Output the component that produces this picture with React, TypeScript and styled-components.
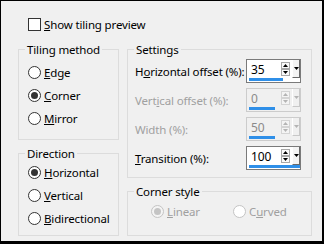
import React from "react";
import styled, { createGlobalStyle } from "styled-components";

const Global = createGlobalStyle`
  html, body { margin: 0; padding: 0; background: #f0f0f0; }
  * { box-sizing: border-box; }
`;

const Dialog = styled.div`
  width: 324px;
  height: 244px;
  background: #f0f0f0;
  border-style: solid;
  border-color: #000;
  border-width: 1px 2px 3px 1px;
  padding: 16px 0 0 17px;
  font-family: "Noto Sans", "DejaVu Sans", sans-serif;
  font-size: 11.5px;
  letter-spacing: -0.15px;
  color: #000;
  display: flex;
  flex-direction: column;
`;

const CheckRow = styled.label`
  display: flex;
  align-items: center;
  height: 15px;
  margin-left: 10px;
  gap: 3px;
`;

const CheckBox = styled.span`
  width: 13px;
  height: 13px;
  border: 1px solid #333;
  background: #fff;
  flex: none;
`;

const Columns = styled.div`
  margin-top: 10px;
  display: grid;
  grid-template-columns: 101px 185px;
  column-gap: 8px;
`;

const Column = styled.div`
  display: flex;
  flex-direction: column;
  gap: 6px;
`;

const Group = styled.fieldset<{ $h: number }>`
  margin: 0;
  min-width: 0;
  border: 1px solid #dcdcdc;
  height: ${(p) => p.$h}px;
  padding: 0;
`;

const Legend = styled.legend`
  padding: 0 2px;
  margin-left: 6px;
  line-height: 15px;
`;

const GroupBody = styled.div<{ $pt: number; $pl: number; $pr?: number }>`
  padding: ${(p) => p.$pt}px ${(p) => p.$pr ?? 0}px 0 ${(p) => p.$pl}px;
`;

const RadioList = styled.div`
  display: flex;
  flex-direction: column;
  gap: 8px;
`;

const RadioRow = styled.label<{ $disabled?: boolean }>`
  display: flex;
  align-items: center;
  height: 15px;
  gap: 3px;
  color: ${(p) => (p.$disabled ? "#a0a0a0" : "#000")};
  white-space: nowrap;
`;

const RadioCircle = styled.span<{ $checked?: boolean; $disabled?: boolean }>`
  width: 13px;
  height: 13px;
  border-radius: 50%;
  border: 1px solid ${(p) => (p.$disabled ? "#c4c4c4" : "#333")};
  background: ${(p) => (p.$disabled && p.$checked ? "#f4f4f4" : "#fff")};
  display: flex;
  align-items: center;
  justify-content: center;
  flex: none;
  &::after {
    content: "";
    display: ${(p) => (p.$checked ? "block" : "none")};
    width: 7px;
    height: 7px;
    border-radius: 50%;
    background: ${(p) => (p.$disabled ? "#c4c4c4" : "#333")};
  }
`;

const SettingsList = styled.div`
  display: flex;
  flex-direction: column;
  gap: 5px;
`;

const SettingRow = styled.div<{ $disabled?: boolean }>`
  display: flex;
  align-items: center;
  justify-content: space-between;
  height: 24px;
  color: ${(p) => (p.$disabled ? "#a0a0a0" : "#000")};
  white-space: nowrap;
`;

const Spin = styled.div<{ $disabled?: boolean }>`
  width: 55px;
  height: 24px;
  border: 1px solid ${(p) => (p.$disabled ? "#cccccc" : "#7a7a7a")};
  background: ${(p) => (p.$disabled ? "#f0f0f0" : "#fff")};
  display: flex;
  flex-direction: column;
  padding: 0 0 1px 1px;
  flex: none;
`;

const SpinTop = styled.div`
  display: flex;
  height: 18px;
`;

const SpinValue = styled.span<{ $disabled?: boolean }>`
  flex: 1;
  padding-left: 3px;
  line-height: 19px;
  font-size: 12px;
  color: ${(p) => (p.$disabled ? "#8a8a8a" : "#000")};
`;

const Arrows = styled.div`
  display: flex;
  flex-direction: column;
  width: 9px;
  margin-top: 2px;
  margin-right: 2px;
`;

const ArrowBtn = styled.span<{ $disabled?: boolean }>`
  width: 9px;
  height: 7px;
  border: 1px solid ${(p) => (p.$disabled ? "#d4d4d4" : "#a8a8a8")};
  background: ${(p) => (p.$disabled ? "#f4f4f4" : "#fafafa")};
  display: flex;
  align-items: center;
  justify-content: center;
`;

const DropBtn = styled.span<{ $disabled?: boolean }>`
  width: 8px;
  height: 18px;
  background: ${(p) => (p.$disabled ? "#f0f0f0" : "#f4f4f4")};
  border-left: 1px solid #fff;
  border-right: 1px solid ${(p) => (p.$disabled ? "#c8c8c8" : "#696969")};
  border-bottom: 1px solid ${(p) => (p.$disabled ? "#c8c8c8" : "#696969")};
  display: flex;
  align-items: center;
  justify-content: center;
`;

const BarTrack = styled.div`
  height: 3px;
  margin-left: 1px;
  width: 51px;
`;

const Bar = styled.div`
  height: 3px;
  background: #2f8fe8;
`;

const CornerRow = styled.div`
  display: grid;
  grid-template-columns: 82px auto;
`;

const Tri = ({ dir, color }: { dir: "up" | "down"; color: string }) => (
  <svg width="5" height="3" viewBox="0 0 5 3">
    {dir === "up" ? (
      <polygon points="2.5,0 5,3 0,3" fill={color} />
    ) : (
      <polygon points="0,0 5,0 2.5,3" fill={color} />
    )}
  </svg>
);

const Radio = ({
  label,
  checked,
  disabled,
}: {
  label: React.ReactNode;
  checked?: boolean;
  disabled?: boolean;
}) => (
  <RadioRow $disabled={disabled}>
    <RadioCircle $checked={checked} $disabled={disabled} />
    <span>{label}</span>
  </RadioRow>
);

const SpinBox = ({
  value,
  fraction,
  disabled,
}: {
  value: string;
  fraction: number;
  disabled?: boolean;
}) => {
  const c = disabled ? "#b4b4b4" : "#000";
  return (
    <Spin $disabled={disabled}>
      <SpinTop>
        <SpinValue $disabled={disabled}>{value}</SpinValue>
        <Arrows>
          <ArrowBtn $disabled={disabled}>
            <Tri dir="up" color={c} />
          </ArrowBtn>
          <ArrowBtn $disabled={disabled}>
            <Tri dir="down" color={c} />
          </ArrowBtn>
        </Arrows>
        <DropBtn $disabled={disabled}>
          <Tri dir="down" color={c} />
        </DropBtn>
      </SpinTop>
      <BarTrack>
        <Bar style={{ width: `${Math.round(fraction * 51)}px` }} />
      </BarTrack>
    </Spin>
  );
};

const settings = [
  { label: <>H<u>o</u>rizontal offset (%):</>, value: "35", fraction: 0.675 },
  { label: <>Vert<u>i</u>cal offset (%):</>, value: "0", fraction: 0.5, disabled: true },
  { label: <>Width (%):</>, value: "50", fraction: 0.5, disabled: true },
  { label: <><u>T</u>ransition (%):</>, value: "100", fraction: 1 },
];

export default function App() {
  return (
    <>
      <Global />
      <Dialog>
        <CheckRow>
          <CheckBox />
          <span>
            <u>S</u>how tiling preview
          </span>
        </CheckRow>
        <Columns>
          <Column>
            <Group $h={98}>
              <Legend>Tiling method</Legend>
              <GroupBody $pt={8} $pl={9}>
                <RadioList>
                  <Radio label={<><u>E</u>dge</>} />
                  <Radio label={<><u>C</u>orner</>} checked />
                  <Radio label={<><u>M</u>irror</>} />
                </RadioList>
              </GroupBody>
            </Group>
            <Group $h={90}>
              <Legend>Direction</Legend>
              <GroupBody $pt={4} $pl={9}>
                <RadioList>
                  <Radio label={<><u>H</u>orizontal</>} checked />
                  <Radio label={<><u>V</u>ertical</>} />
                  <Radio label={<><u>B</u>idirectional</>} />
                </RadioList>
              </GroupBody>
            </Group>
          </Column>
          <Column>
            <Group $h={136}>
              <Legend>Settings</Legend>
              <GroupBody $pt={2} $pl={7} $pr={10}>
                <SettingsList>
                  {settings.map((s, i) => (
                    <SettingRow key={i} $disabled={s.disabled}>
                      <span>{s.label}</span>
                      <SpinBox value={s.value} fraction={s.fraction} disabled={s.disabled} />
                    </SettingRow>
                  ))}
                </SettingsList>
              </GroupBody>
            </Group>
            <Group $h={52}>
              <Legend>Corner style</Legend>
              <GroupBody $pt={5} $pl={23}>
                <CornerRow>
                  <Radio label={<><u>L</u>inear</>} checked disabled />
                  <Radio label={<>C<u>u</u>rved</>} disabled />
                </CornerRow>
              </GroupBody>
            </Group>
          </Column>
        </Columns>
      </Dialog>
    </>
  );
}
